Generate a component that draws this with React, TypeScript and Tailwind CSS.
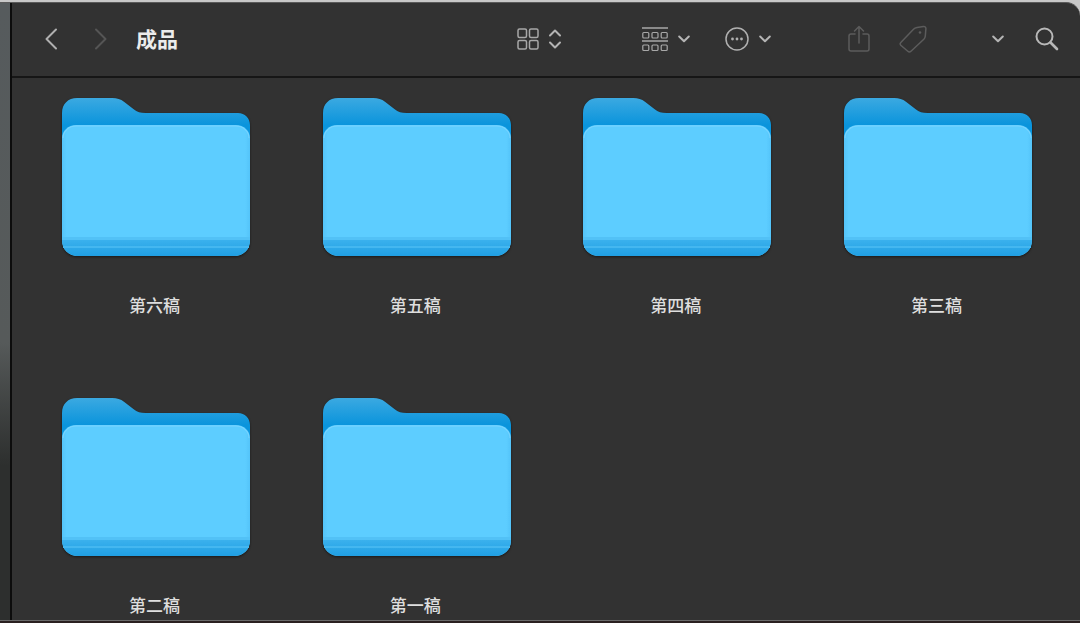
import React from "react";

const FOLDERS = ["第六稿", "第五稿", "第四稿", "第三稿", "第二稿", "第一稿"];

const CJK = "font-['Noto_Sans_CJK_SC','Noto_Sans',sans-serif]";

const Chevron: React.FC<{ className?: string }> = ({ className }) => (
  <svg width="12" height="8" viewBox="0 0 12 8" fill="none" stroke="#b4b4b4" strokeWidth="2" strokeLinecap="round" strokeLinejoin="round" className={className}>
    <path d="M1.2 1.5 6 6.3l4.8-4.8" />
  </svg>
);

const Folder: React.FC<{ id: number }> = ({ id }) => (
  <svg width="188" height="159" viewBox="0 0 187 159" preserveAspectRatio="none" className="drop-shadow-[0_1px_1px_rgba(0,0,0,0.5)]">
    <defs>
      <linearGradient id={`back-${id}`} gradientUnits="userSpaceOnUse" x1="0" y1="0" x2="0" y2="27">
        <stop offset="0" stopColor="#3ba9e1" />
        <stop offset="1" stopColor="#0a94dc" />
      </linearGradient>
      <linearGradient id={`front-${id}`} x1="0" y1="0" x2="1" y2="0">
        <stop offset="0" stopColor="#54c4f9" />
        <stop offset="0.025" stopColor="#5dcdff" />
        <stop offset="0.975" stopColor="#5dcdff" />
        <stop offset="1" stopColor="#54c4f9" />
      </linearGradient>
      <linearGradient id={`base-${id}`} x1="0" y1="0" x2="0" y2="1">
        <stop offset="0" stopColor="#3fb4ef" />
        <stop offset="1" stopColor="#209fe3" />
      </linearGradient>
    </defs>
    <path
      d="M0 40V15C0 6 6 0 15 0H50C55 0 58 1 62 4L71 11C75 14 78 15 83 15H175C182 15 187 20 187 27V40Z"
      fill={`url(#back-${id})`}
    />
    <path
      d="M0 40C0 33 6 27 14 27H173C181 27 187 33 187 40V142C187 152 180 158 171 158H16C7 158 0 152 0 142Z"
      fill={`url(#front-${id})`}
    />
    <path d="M0 139H187V142C187 152 180 158 171 158H16C7 158 0 152 0 142Z" fill={`url(#base-${id})`} />
    <rect x="0" y="139" width="187" height="3" fill="#52c1f6" />
    <rect x="1" y="148" width="185" height="2" fill="#44b7f0" />
    <path d="M1 40C1 33.5 6.5 28 14 28H173C180.500 28 186 33.500 186 40" fill="none" stroke="#86d8ff" strokeWidth="1" opacity="0.7" />
  </svg>
);

const FolderItem: React.FC<{ name: string; id: number }> = ({ name, id }) => (
  <div className="flex w-[188px] flex-col items-center">
    <Folder id={id} />
    <div className={`mt-[36px] -translate-x-[1.500px] h-[24px] text-[17px] leading-[24px] whitespace-nowrap font-medium text-[#dedede] ${CJK}`}>{name}</div>
  </div>
);

const App: React.FC = () => {
  return (
    <div className="flex h-[623px] w-[1080px] flex-col overflow-hidden bg-[#c8c8c8]">
      <div className="h-[2px] shrink-0" />
      <div className="flex min-h-0 flex-1 overflow-hidden rounded-tr-[14px] border-t-[1.500px] border-t-[#5a5a5a] bg-[#323232]">
        {/* Sliver of the window behind */}
        <div className="w-[10px] shrink-0 bg-gradient-to-b from-[#565b5d] via-[#565a5a] via-55% to-[#2d2f2e] to-75%" />
        <div className="w-[2px] shrink-0 bg-[#0c0c0c]" />
        <main className="flex min-w-0 flex-1 flex-col">
          {/* Toolbar */}
          <header className="flex h-[74.500px] shrink-0 items-center border-b-2 border-b-[#161616] pl-[31.500px]">
            <svg width="14" height="22" viewBox="0 0 14 22" fill="none" stroke="#b0b0b0" strokeWidth="2" strokeLinecap="round" strokeLinejoin="round">
              <path d="M12 1.500 2.500 11l9.500 9.500" />
            </svg>
            <svg width="14" height="22" viewBox="0 0 14 22" fill="none" stroke="#555555" strokeWidth="2" strokeLinecap="round" strokeLinejoin="round" className="ml-[36px]">
              <path d="M2 1.500 11.500 11 2 20.500" />
            </svg>
            <div className={`ml-[28.500px] -translate-y-[1px] text-[21px] leading-[28px] font-bold text-[#ececec] ${CJK}`}>成品</div>

            {/* view switcher */}
            <svg width="22" height="22" viewBox="0 0 22 22" fill="none" stroke="#a8a8a8" strokeWidth="1.500" className="ml-[339px]">
              <rect x="1" y="1" width="8.500" height="8.500" rx="1.500" />
              <rect x="12.500" y="1" width="8.500" height="8.500" rx="1.500" />
              <rect x="1" y="12.500" width="8.500" height="8.500" rx="1.500" />
              <rect x="12.500" y="12.500" width="8.500" height="8.500" rx="1.500" />
            </svg>
            <svg width="14" height="22" viewBox="0 0 14 22" fill="none" stroke="#b4b4b4" strokeWidth="2" strokeLinecap="round" strokeLinejoin="round" className="ml-[9px]">
              <path d="M2 7.500 7 2.500l5 5M2 14.500l5 5 5-5" />
            </svg>

            {/* group by */}
            <svg width="26" height="25" viewBox="0 0 26 25" fill="none" stroke="#a8a8a8" className="ml-[80px]">
              <path d="M0 1h26M0 14h26" strokeWidth="1.500" />
              <g strokeWidth="1.200">
                <rect x="0.800" y="5.500" width="6" height="5.500" rx="1" />
                <rect x="10" y="5.500" width="6" height="5.500" rx="1" />
                <rect x="19.200" y="5.500" width="6" height="5.500" rx="1" />
                <rect x="0.800" y="18" width="6" height="5.500" rx="1" />
                <rect x="10" y="18" width="6" height="5.500" rx="1" />
                <rect x="19.200" y="18" width="6" height="5.500" rx="1" />
              </g>
            </svg>
            <Chevron className="ml-[10px]" />

            {/* actions */}
            <svg width="24" height="24" viewBox="0 0 24 24" fill="none" className="ml-[34.500px]">
              <circle cx="12" cy="12" r="11" stroke="#b0b0b0" strokeWidth="1.500" />
              <circle cx="7.500" cy="12" r="1.400" fill="#b0b0b0" />
              <circle cx="12" cy="12" r="1.400" fill="#b0b0b0" />
              <circle cx="16.500" cy="12" r="1.400" fill="#b0b0b0" />
            </svg>
            <Chevron className="ml-[10px]" />

            {/* share */}
            <svg width="22" height="27" viewBox="0 0 22 27" fill="none" stroke="#5c5c5c" strokeWidth="1.500" strokeLinecap="round" strokeLinejoin="round" className="ml-[77px] -translate-y-[1px]">
              <path d="M7 9H3a2 2 0 0 0-2 2v13a2 2 0 0 0 2 2h16a2 2 0 0 0 2-2V11a2 2 0 0 0-2-2h-4" />
              <path d="M11 18V1.500M6.500 6 11 1.500 15.500 6" />
            </svg>
            {/* tag */}
            <svg width="28" height="28" viewBox="0 0 28 28" fill="none" className="ml-[29px]">
              <path
                d="M1.800 17.400 14.500 4.200C15.500 3.200 16.500 2.800 18 2.500L24.500 1.500C26 1.300 27 2.300 26.900 3.800L26.300 11C26.200 12.300 25.800 13.300 24.800 14.300L12 26.300C11 27.200 9.800 27.200 8.800 26.300L1.800 20.300C1 19.400 1 18.300 1.800 17.400Z"
                stroke="#5c5c5c"
                strokeWidth="1.500"
              />
              <circle cx="21" cy="7.500" r="1.300" fill="#5c5c5c" />
            </svg>

            <Chevron className="ml-[65px]" />
            {/* search */}
            <svg width="24" height="24" viewBox="0 0 24 24" fill="none" stroke="#b8b8b8" strokeLinecap="round" className="ml-[31px]">
              <circle cx="9.500" cy="9.500" r="8" strokeWidth="2" />
              <path d="M15.500 15.500 22 22" strokeWidth="2.600" />
            </svg>
          </header>

          {/* Icon grid */}
          <div className="grid grid-cols-[repeat(4,188px)] content-start gap-x-[72.670px] gap-y-[81px] pt-[20px] pl-[50px]">
            {FOLDERS.map((name, i) => (
              <FolderItem key={name} name={name} id={i} />
            ))}
          </div>
        </main>
      </div>
      <div className="h-[1.500px] shrink-0 bg-[#6a6a6a]" />
      <div className="h-[2px] shrink-0 bg-[#2a2020]" />
    </div>
  );
};

export default App;
